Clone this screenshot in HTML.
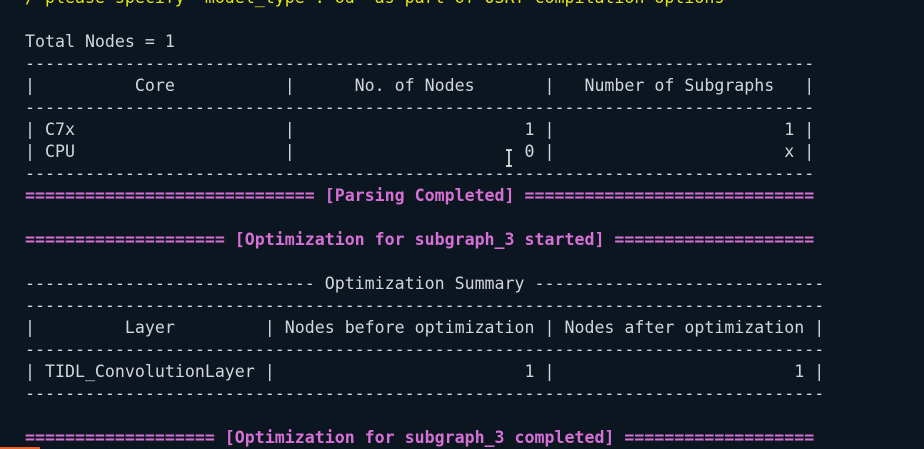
<!DOCTYPE html>
<html><head><meta charset="utf-8"><style>
html,body{margin:0;padding:0;background:#0c1620;width:924px;height:449px;overflow:hidden}
pre{position:absolute;left:25px;top:-13px;margin:0;font-family:"DejaVu Sans Mono","Liberation Mono",monospace;font-size:16.6px;line-height:22px;color:#d2d6da;white-space:pre}
.y{color:#e5e510}.m{color:#d670d6;font-weight:bold}
.cur{position:absolute;left:506px;top:149px;width:6px;height:18px}
.or{position:absolute;left:0;top:447px;width:40px;height:2px;background:#e8642c}
</style></head><body>
<pre><span class="y">/ please specify 'model_type':'od' as part of OSRT compilation options</span>

Total Nodes = 1
-------------------------------------------------------------------------------
|          Core           |      No. of Nodes       |   Number of Subgraphs   |
-------------------------------------------------------------------------------
| C7x                     |                       1 |                       1 |
| CPU                     |                       0 |                       x |
-------------------------------------------------------------------------------
<span class="m">============================= [Parsing Completed] =============================</span>

<span class="m">==================== [Optimization for subgraph_3 started] ====================</span>

----------------------------- Optimization Summary -----------------------------
--------------------------------------------------------------------------------
|         Layer         | Nodes before optimization | Nodes after optimization |
--------------------------------------------------------------------------------
| TIDL_ConvolutionLayer |                         1 |                        1 |
--------------------------------------------------------------------------------

<span class="m">=================== [Optimization for subgraph_3 completed] ===================</span>
</pre>
<svg class="cur" viewBox="0 0 6 18"><path d="M0 1H6M3 1V17M0 17H6" stroke="#fff" stroke-width="1.5" fill="none"/></svg>
<div class="or"></div>
</body></html>
